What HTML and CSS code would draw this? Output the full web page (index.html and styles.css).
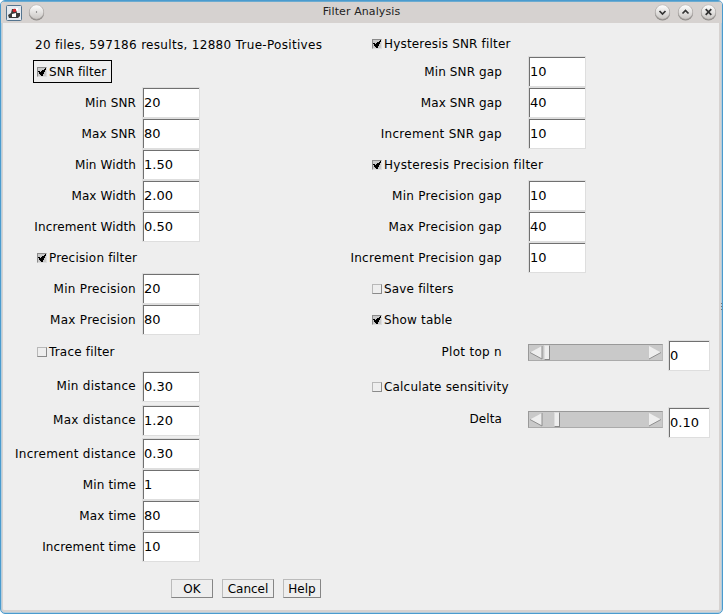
FILE: index.html
```
<!DOCTYPE html>
<html lang="en"><head><meta charset="utf-8"><title>Filter Analysis</title><link rel="stylesheet" href="styles.css"></head>
<body>
<div class="window">
<header class="titlebar">
<svg class="app" width="16" height="16" viewBox="0 0 16 16"><rect x=".5" y=".5" width="15" height="15" rx="1" fill="#e5eaf0" stroke="#54748f"/><path d="M2 10l3-2 1-4h4l1 4 3 0v3l-2 2H3z" fill="#3b3b3b"/><path d="M6 9l4-1v4H6zM10 3h2v3h-2z" fill="#fff"/><circle cx="8.5" cy="5.5" r="1.8" fill="#d5252b"/></svg>
<svg class="round" width="17" height="17" viewBox="0 0 17 17"><use href="#ball"/><circle cx="8.5" cy="8" r=".7" fill="#666"/></svg>
<h1>Filter Analysis</h1>
<svg class="round" width="17" height="17" viewBox="0 0 17 17"><defs><linearGradient id="g" x2="0" y2="1"><stop stop-color="#fff"/><stop offset="1" stop-color="#c9c6c3"/></linearGradient><g id="ball"><circle cx="8.5" cy="8.9" r="7.6" fill="#8e8b88"/><circle cx="8.5" cy="8" r="7.2" fill="url(#g)" stroke="#b3afac" stroke-width=".6"/></g></defs><use href="#ball"/><path class="ico" d="M5.5 7l3 3 3-3"/></svg>
<svg class="round" width="17" height="17" viewBox="0 0 17 17"><use href="#ball"/><path class="ico" d="M5.5 9.5l3-3 3 3"/></svg>
<svg class="round" width="17" height="17" viewBox="0 0 17 17"><use href="#ball"/><path class="ico" d="M5.7 5.2l5.6 5.6M11.3 5.2l-5.6 5.6"/></svg>
</header>
<svg width="0" height="0" class="defs"><symbol id="tick" viewBox="0 0 10 10"><path d="M1 4h2v1h1v-1h1v-1h2v-1h1v-1h1v2h-1v2h-1v2h-1v2h-2v-1h-1v-1h-1v-2h-1z"/></symbol></svg>
<main class="form">
<section class="left">
<p class="summary"><span>20 files, 597186 results, 12880 True-Positives</span></p>
<div class="focusrow"><label class="check focus"><i class="box on"><svg><use href="#tick"/></svg></i>SNR filter</label></div>
<div class="row"><label>Min SNR</label><span class="field">20</span></div>
<div class="row"><label>Max SNR</label><span class="field">80</span></div>
<div class="row"><label>Min Width</label><span class="field">1.50</span></div>
<div class="row"><label>Max Width</label><span class="field">2.00</span></div>
<div class="row"><label>Increment Width</label><span class="field">0.50</span></div>
<label class="check"><i class="box on"><svg><use href="#tick"/></svg></i>Precision filter</label>
<div class="row wide"><label>Min Precision</label><span class="field">20</span></div>
<div class="row wide"><label>Max Precision</label><span class="field">80</span></div>
<label class="check trace"><i class="box"></i>Trace filter</label>
<div class="row wide dist"><label>Min distance</label><span class="field">0.30</span></div>
<div class="row wide dist"><label>Max distance</label><span class="field">1.20</span></div>
<div class="row wide"><label>Increment distance</label><span class="field">0.30</span></div>
<div class="row"><label>Min time</label><span class="field">1</span></div>
<div class="row"><label>Max time</label><span class="field">80</span></div>
<div class="row"><label>Increment time</label><span class="field">10</span></div>
</section>
<section class="right">
<label class="check first"><i class="box on"><svg><use href="#tick"/></svg></i>Hysteresis SNR filter</label>
<div class="row"><label>Min SNR gap</label><span class="field">10</span></div>
<div class="row"><label>Max SNR gap</label><span class="field">40</span></div>
<div class="row wide"><label>Increment SNR gap</label><span class="field">10</span></div>
<label class="check wide"><i class="box on"><svg><use href="#tick"/></svg></i>Hysteresis Precision filter</label>
<div class="row wide"><label>Min Precision gap</label><span class="field">10</span></div>
<div class="row wide"><label>Max Precision gap</label><span class="field">40</span></div>
<div class="row wide"><label>Increment Precision gap</label><span class="field">10</span></div>
<label class="check"><i class="box"></i>Save filters</label>
<label class="check"><i class="box on"><svg><use href="#tick"/></svg></i>Show table</label>
<div class="row wide slide"><label>Plot top n</label><span class="bar"><svg width="14" height="15"><path d="M1 7.5L13 1V14z" fill="#eee"/><path d="M1 7.5L13 14V1" fill="none" stroke="#8e8e8e"/></svg><i class="thumb"></i><svg class="next" width="14" height="15"><path d="M13 7.5L1 1V14z" fill="#eee"/><path d="M1 14L13 7.5" stroke="#8e8e8e"/></svg></span><span class="field small">0</span></div>
<label class="check"><i class="box"></i>Calculate sensitivity</label>
<div class="row slide"><label>Delta</label><span class="bar"><svg width="14" height="15"><path d="M1 7.5L13 1V14z" fill="#eee"/><path d="M1 7.5L13 14V1" fill="none" stroke="#8e8e8e"/></svg><i class="thumb far"></i><svg class="next" width="14" height="15"><path d="M13 7.5L1 1V14z" fill="#eee"/><path d="M1 14L13 7.5" stroke="#8e8e8e"/></svg></span><span class="field small">0.10</span></div>
</section>
</main>
<footer><button class="ok">OK</button><button class="cancel">Cancel</button><button class="help">Help</button></footer>
<i class="grip"></i>
</div>
</body></html>
```
FILE: styles.css
```
* { box-sizing: border-box; }
body { margin: 0; background: #fff; color: #000; font: 12px/16px "DejaVu Sans", sans-serif; }
.window { position: relative; width: 723px; height: 614px; border: 1px solid #4a9bce; border-radius: 5px; background: #eee; box-shadow: inset 0 0 0 1px #b4cddd, inset 0 -3px #d6d2d0, inset -3px 0 #d6d2d0, inset 2px 0 #d6d2d0; overflow: hidden; }
.titlebar { display: flex; align-items: center; height: 22px; padding: 0 5px; background: #d6d2d0; border-top: 1px solid #6cabd0; }
.titlebar h1 { flex: 1; margin: 0; text-align: center; font-size: 11px; font-weight: normal; letter-spacing: .1px; color: #222; padding: 0 0 2px 30px; }
.round { margin-left: 6px; }
.ico { fill: none; stroke: #333; stroke-width: 1.7; }
.defs { position: absolute; }
.form { display: flex; height: 540px; }
.left { width: 335px; padding-top: 8px; }
.right { width: 380px; padding-top: 6px; }
.summary { height: 27px; margin: 0; padding: 6px 0 0 34px; white-space: nowrap; letter-spacing: .31px; }
.focusrow { height: 29px; padding: 2px 0 0 32px; }
.row { display: flex; align-items: center; height: 31px; }
.row > label { width: 135px; margin-right: 6px; text-align: right; white-space: nowrap; letter-spacing: .12px; }
.right .row > label { width: 166px; margin-right: 26px; }
.row.wide > label, .check.wide { letter-spacing: .29px; }
.field { flex: none; width: 58px; height: 31px; padding: 6px 0 0 1px; border: 1px solid #dedede; background: #fff; box-shadow: inset 1px 1px #707070; font-size: 13px; line-height: 18px; }
.check { display: flex; align-items: center; height: 31px; padding-left: 36px; gap: 2px; white-space: nowrap; letter-spacing: .18px; }
.check.first { height: 27px; padding-top: 3px; }
.check.focus { width: 79px; height: 23px; padding-left: 3px; border: 1px solid #000; letter-spacing: .05px; }
.box { flex: none; width: 10px; height: 10px; border: 1px solid #b8b8b8; border-right-color: #8a8a8a; border-bottom-color: #8a8a8a; }
.box.on { background: #c9c9c9; border-color: #8a8a8a #ddd #ddd #8a8a8a; }
.box svg { display: block; width: 10px; height: 10px; margin: -1px; }
.trace { height: 34px; }
.dist { height: 34px; }
.slide { height: 36px; align-items: flex-start; }
.slide > label { padding-top: 9px; }
.bar { display: flex; width: 135px; height: 17px; margin: 9px 5px 0 0; padding: 1px 0; border: 1px solid #999; border-right-color: #bbb; border-bottom-color: #aaa; background: #c9c9c9; }
.slide .field { margin-top: 5px; }
.small { width: 42px; }
.bar svg { flex: none; margin-top: -1px; }
.thumb { width: 6px; height: 15px; margin: -1px 0 0 1px; background: #eee; border: 1px solid #ddd; border-right-color: #888; border-bottom-color: #888; }
.thumb.far { margin-left: 11px; }
.bar .next { margin-left: auto; }
.left .dist + .wide:not(.dist) { margin-top: 1px; }
footer { display: flex; padding: 16px 0 0 170px; }
button { height: 19px; padding: 0; background: #eee; border: 1px solid #bbb; border-right-color: #858585; border-bottom-color: #858585; font: inherit; }
.ok { width: 42px; margin-right: 9px; }
.cancel { width: 52px; margin-right: 9px; }
.help { width: 38px; }
.grip { position: absolute; right: 0; top: 302px; width: 1px; height: 8px; background: repeating-linear-gradient(#777 0 1px, transparent 1px 3px); }
```
